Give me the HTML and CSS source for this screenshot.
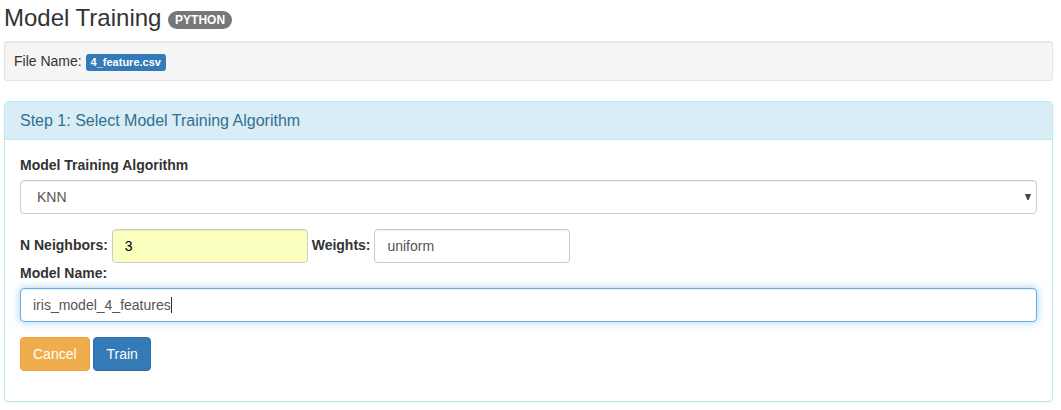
FILE: index.html
```html
<!DOCTYPE html>
<html lang="en">
<head>
<meta charset="utf-8">
<meta name="viewport" content="width=device-width, initial-scale=1">
<title>Model Training</title>
<link rel="stylesheet" href="styles.css">
</head>
<body>
<main class="page">
  <h1 class="page-title">Model Training <span class="badge">PYTHON</span></h1>
  <div class="well">File Name: <span class="label">4_feature.csv</span></div>
  <section class="panel">
    <h2 class="panel-heading">Step 1: Select Model Training Algorithm</h2>
    <form class="panel-body">
      <div class="form-group">
        <label for="algorithm">Model Training Algorithm</label>
        <div class="select-wrap">
          <select id="algorithm" class="form-control select">
            <option>KNN</option>
          </select>
          <svg class="arrow" viewBox="0 0 6 6" aria-hidden="true"><path d="M0 0H6L3.6 6H2.4Z"/></svg>
        </div>
      </div>
      <div class="form-inline">
        <label for="neighbors">N Neighbors:</label>
        <input id="neighbors" class="form-control short filled" type="text" value="3">
        <label for="weights">Weights:</label>
        <input id="weights" class="form-control short" type="text" value="uniform">
      </div>
      <div class="form-group">
        <label for="model-name">Model Name:</label>
        <div class="name-wrap">
          <input id="model-name" class="form-control active" type="text" value="iris_model_4_features">
          <span class="caret" aria-hidden="true"></span>
        </div>
      </div>
      <div class="actions">
        <button class="btn btn-warning" type="button">Cancel</button>
        <button class="btn btn-primary" type="button">Train</button>
      </div>
    </form>
  </section>
</main>
</body>
</html>
```
FILE: styles.css
```css
* {
  box-sizing: border-box;
}

body {
  margin: 0;
  background: #fff;
  color: #333;
  font: 14px/20px "Liberation Sans", Arial, sans-serif;
}

.page {
  padding: 5px 8px 8px 4px;
}

.page-title {
  margin: 0 0 10px;
  font-size: 24px;
  font-weight: 500;
  line-height: 26px;
}

.badge {
  display: inline-block;
  padding: 3px 7px;
  border-radius: 10px;
  background: #777;
  color: #fff;
  font-size: 12px;
  font-weight: 700;
  line-height: 12px;
  vertical-align: middle;
}

.well {
  margin-bottom: 20px;
  padding: 9px;
  border: 1px solid #e3e3e3;
  border-radius: 3px;
  background: #f5f5f5;
  box-shadow: inset 0 1px 1px rgba(0, 0, 0, 0.05);
}

.label {
  padding: 2px 5px 3px;
  border-radius: 3px;
  background: #337ab7;
  color: #fff;
  font-size: 11px;
  font-weight: 700;
  line-height: 11px;
}

.panel {
  border: 1px solid #bce8f1;
  border-radius: 4px;
  box-shadow: 0 1px 1px rgba(0, 0, 0, 0.05);
}

.panel-heading {
  margin: 0;
  padding: 10px 15px;
  border-bottom: 1px solid #bce8f1;
  border-radius: 3px 3px 0 0;
  background: #d9edf7;
  color: #31708f;
  font-size: 16px;
  font-weight: 500;
  line-height: 17px;
}

.panel-body {
  padding: 15px 15px 30px;
}

.form-group {
  margin-bottom: 15px;
}

.form-group label {
  display: block;
  margin-bottom: 5px;
}

label {
  font-weight: 700;
}

.form-control {
  width: 100%;
  height: 34px;
  margin: 0;
  padding: 6px 12px;
  border: 1px solid #ccc;
  border-radius: 4px;
  background: #fff;
  box-shadow: inset 0 1px 1px rgba(0, 0, 0, 0.075);
  color: #555;
  font: inherit;
  outline: none;
}

.select-wrap,
.name-wrap {
  position: relative;
}

.select {
  display: block;
  padding-left: 16px;
  appearance: none;
}

.arrow {
  position: absolute;
  top: 14px;
  right: 6px;
  width: 6px;
  height: 6px;
  fill: #444;
  pointer-events: none;
}

.short {
  width: 196px;
  vertical-align: middle;
}

.filled {
  background: #faffbd;
  color: #000;
}

.active {
  display: block;
  border-color: #66afe9;
  box-shadow: inset 0 1px 1px rgba(0, 0, 0, 0.075), 0 0 8px rgba(102, 175, 233, 0.6);
}

.caret {
  position: absolute;
  top: 9px;
  left: 151px;
  width: 1px;
  height: 16px;
  background: #333;
  pointer-events: none;
}

.btn {
  margin: 0;
  padding: 6px 12px;
  border: 1px solid;
  border-radius: 4px;
  color: #fff;
  font: inherit;
  vertical-align: middle;
  cursor: pointer;
}

.btn-warning {
  border-color: #eea236;
  background: #f0ad4e;
}

.btn-primary {
  border-color: #2e6da4;
  background: #337ab7;
}
```
